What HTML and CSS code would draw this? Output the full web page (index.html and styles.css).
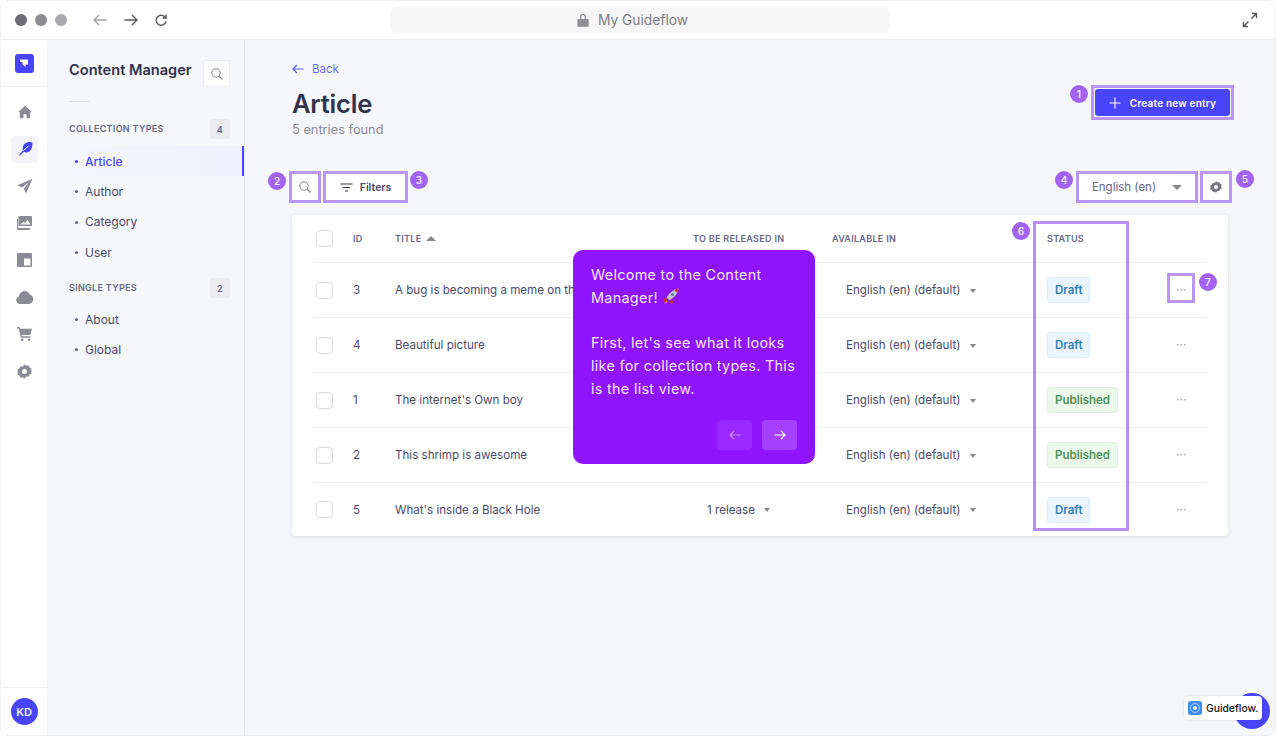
FILE: index.html
```html
<!DOCTYPE html>
<html lang="en">

<head>
    <meta charset="UTF-8">
    <meta name="viewport" content="width=device-width, initial-scale=1.0">
    <title>My Guideflow</title>
    <link rel="stylesheet" href="styles.css">
</head>

<body>
    <div class="window">
        <header class="topbar">
            <div class="dots">
                <span class="dot dot-1"></span>
                <span class="dot dot-2"></span>
                <span class="dot dot-3"></span>
            </div>
            <div class="nav-icons">
                <svg class="nav-back" width="16" height="16" viewBox="0 0 16 16"><path d="M14.5 8H2M7 3 2 8l5 5" /></svg>
                <svg class="nav-fwd" width="16" height="16" viewBox="0 0 16 16"><path d="M1.5 8H14M9 3l5 5-5 5" /></svg>
                <svg class="nav-fwd" width="14" height="14" viewBox="0 0 14 14"><path d="M11.6 5A5 5 0 1 0 12 8.5M12 1.5V5H8.5" /></svg>
            </div>
            <div class="address">
                <svg width="12" height="14" viewBox="0 0 12 14"><path fill="#8d8d92" d="M1.5 6h9A1.2 1.2 0 0 1 11.7 7.200v5.300A1.200 1.200 0 0 1 10.500 13.700h-9A1.200 1.200 0 0 1 .3 12.500V7.200A1.200 1.200 0 0 1 1.500 6zM3 6V3.800a3 3 0 0 1 6 0V6H7.700V3.800a1.700 1.700 0 0 0-3.400 0V6z" /></svg>
                <span>My Guideflow</span>
            </div>
            <svg class="expand" width="16" height="16" viewBox="0 0 16 16"><path d="M9.500 6.500 14.500 1.500M10 1.500h4.500V6M6.500 9.500l-5 5M1.500 10v4.500H6" /></svg>
        </header>

        <div class="app">
            <nav class="rail">
                <div class="rail-logo">
                    <span class="logo-box">
                        <svg width="10" height="10" viewBox="0 0 10 10"><path fill="#fff" d="M1 1.500h8v5H6.500V9L3.500 6.500V4H1z" /></svg>
                    </span>
                </div>
                <ul class="rail-icons">
                    <li><svg width="14" height="14" viewBox="0 0 16 16"><path d="M8 .8 .8 7.600 2 8.500V14a1.200 1.200 0 0 0 1.200 1.200h3.100v-4.700h3.400v4.700h3.100A1.200 1.200 0 0 0 14 14V8.500l1.200-.9z" /></svg></li>
                    <li class="rail-active">
                        <svg width="16" height="16" viewBox="0 0 16 16">
                            <path d="M15.500 1.500c-4-1.500-8.500.2-9.500 4-.4 1.500-.4 3-.1 4l-4 4.500.9.8 4.100-4c1.500.8 3.500.8 5 0 2.500-1.300 3.800-5.300 3.600-9.300z" />
                            <path class="vein" d="M6.500 9.500 11.500 5" />
                        </svg>
                    </li>
                    <li><svg width="16" height="16" viewBox="0 0 16 16"><path d="M15.500.8 .5 7.200l4.700 2.300L12 4 6.800 10.800l2.300 4.700z" /></svg></li>
                    <li>
                        <svg width="15" height="14" viewBox="0 0 15 14">
                            <path fill-rule="evenodd" d="M2.500 0H14a1 1 0 0 1 1 1v8a1 1 0 0 1-1 1H2.500a1 1 0 0 1-1-1V1a1 1 0 0 1 1-1zM3 8.500h10.500L10.500 4 8 7 6.500 5.800z" />
                            <path d="M0 3h1v8a1 1 0 0 0 1 1h11v1a1 1 0 0 1-1 1H1a1 1 0 0 1-1-1z" />
                        </svg>
                    </li>
                    <li><svg width="15" height="14" viewBox="0 0 15 14"><path fill-rule="evenodd" d="M1 0h13a1 1 0 0 1 1 1v12a1 1 0 0 1-1 1H1a1 1 0 0 1-1-1V1a1 1 0 0 1 1-1zM7 5.500v7h6.500v-7z" /></svg></li>
                    <li><svg width="17" height="13" viewBox="0 0 17 13"><path d="M4 13a4 4 0 0 1-1-7.800C3.400 2.300 5.800 0 8.700 0c2.400 0 4.500 1.500 5.300 3.700a4.800 4.800 0 0 1-1 9.300z" /></svg></li>
                    <li><svg width="15" height="14" viewBox="0 0 16 15"><path d="M0 0h2.800l.5 2H16l-1.800 6.500H5l.3 1.500h9v1.500H4L2 1.500H0zM5.500 12.200a1.400 1.400 0 1 1 0 2.800 1.400 1.400 0 0 1 0-2.800zm7.500 0a1.400 1.400 0 1 1 0 2.800 1.400 1.400 0 0 1 0-2.800z" /></svg></li>
                    <li><svg width="15" height="15" viewBox="0 0 16 16"><path fill-rule="evenodd" d="M8 .5 10 1.700l2.400-.1 1.100 2.100 2 1.300-.3 2.500.3 2.500-2 1.300-1.100 2.100-2.400-.1L8 15.500l-2-1.200-2.400.1-1.100-2.100-2-1.300.3-2.500-.3-2.500 2-1.300 1.100-2.100 2.400.1zM8 5.300a2.700 2.700 0 1 0 0 5.400 2.700 2.700 0 0 0 0-5.400z" /></svg></li>
                </ul>
                <div class="rail-user"><span class="avatar">KD</span></div>
            </nav>

            <aside class="subnav">
                <div class="subnav-head">
                    <h2>Content Manager</h2>
                    <span class="icon-btn">
                        <svg class="search-icon" width="12" height="12" viewBox="0 0 12 12"><circle cx="5" cy="5" r="4.200" /><path d="m8 8 3.500 3.500" /></svg>
                    </span>
                </div>
                <div class="subnav-rule"></div>
                <div class="section-head section-first"><span>COLLECTION TYPES</span><b>4</b></div>
                <ul class="links">
                    <li class="current">Article</li>
                    <li>Author</li>
                    <li>Category</li>
                    <li>User</li>
                </ul>
                <div class="section-head"><span>SINGLE TYPES</span><b>2</b></div>
                <ul class="links links-second">
                    <li>About</li>
                    <li>Global</li>
                </ul>
            </aside>

            <main class="content">
                <a class="back">
                    <svg width="12" height="10" viewBox="0 0 12 10"><path d="M11.500 5H1M5 1 1 5l4 4" /></svg>
                    Back
                </a>
                <div class="page-head">
                    <div>
                        <h1>Article</h1>
                        <p>5 entries found</p>
                    </div>
                    <button class="create">
                        <i class="marker m1">1</i>
                        <svg width="12" height="12" viewBox="0 0 12 12"><path d="M6 .5v11M.5 6h11" /></svg>
                        Create new entry
                    </button>
                </div>

                <div class="toolbar">
                    <div class="tools">
                        <span class="tool tool-search">
                            <i class="marker m2">2</i>
                            <svg class="search-icon" width="12" height="12" viewBox="0 0 12 12"><circle cx="5" cy="5" r="4.200" /><path d="m8 8 3.500 3.500" /></svg>
                        </span>
                        <span class="tool tool-filters">
                            <i class="marker m3">3</i>
                            <svg width="13" height="9" viewBox="0 0 13 9"><path d="M.5 1h12M3 4.500h7M5 8h3" /></svg>
                            Filters
                        </span>
                    </div>
                    <div class="tools">
                        <span class="tool tool-locale">
                            <i class="marker m4">4</i>
                            English (en)
                            <span class="caret caret-big"></span>
                        </span>
                        <span class="tool tool-gear">
                            <i class="marker m5">5</i>
                            <svg width="12" height="12" viewBox="0 0 16 16"><path fill="#777782" fill-rule="evenodd" d="M8 .5 10 1.700l2.400-.1 1.100 2.100 2 1.300-.3 2.500.3 2.500-2 1.300-1.100 2.100-2.400-.1L8 15.500l-2-1.200-2.400.1-1.100-2.100-2-1.300.3-2.500-.3-2.500 2-1.300 1.100-2.100 2.400.1zM8 5.300a2.700 2.700 0 1 0 0 5.400 2.700 2.700 0 0 0 0-5.400z" /></svg>
                        </span>
                    </div>
                </div>

                <section class="table-card">
                    <div class="row row-head">
                        <span class="check"></span>
                        <span>ID</span>
                        <span class="title-head">TITLE <i class="caret caret-up"></i></span>
                        <span>TO BE RELEASED IN</span>
                        <span>AVAILABLE IN</span>
                        <span>STATUS</span>
                        <span></span>
                    </div>
                    <div class="row">
                        <span class="check"></span>
                        <span>3</span>
                        <span>A bug is becoming a meme on th</span>
                        <span class="cell-in"></span>
                        <span class="cell-in">English (en) (default) <i class="caret"></i></span>
                        <span><em class="tag tag-draft">Draft</em></span>
                        <span class="more more-hl"><i class="marker m7">7</i>···</span>
                    </div>
                    <div class="row">
                        <span class="check"></span>
                        <span>4</span>
                        <span>Beautiful picture</span>
                        <span class="cell-in"></span>
                        <span class="cell-in">English (en) (default) <i class="caret"></i></span>
                        <span><em class="tag tag-draft">Draft</em></span>
                        <span class="more">···</span>
                    </div>
                    <div class="row">
                        <span class="check"></span>
                        <span>1</span>
                        <span>The internet's Own boy</span>
                        <span class="cell-in"></span>
                        <span class="cell-in">English (en) (default) <i class="caret"></i></span>
                        <span><em class="tag tag-pub">Published</em></span>
                        <span class="more">···</span>
                    </div>
                    <div class="row">
                        <span class="check"></span>
                        <span>2</span>
                        <span>This shrimp is awesome</span>
                        <span class="cell-in"></span>
                        <span class="cell-in">English (en) (default) <i class="caret"></i></span>
                        <span><em class="tag tag-pub">Published</em></span>
                        <span class="more">···</span>
                    </div>
                    <div class="row row-last">
                        <span class="check"></span>
                        <span>5</span>
                        <span>What's inside a Black Hole</span>
                        <span class="cell-in">1 release <i class="caret"></i></span>
                        <span class="cell-in">English (en) (default) <i class="caret"></i></span>
                        <span><em class="tag tag-draft">Draft</em></span>
                        <span class="more">···</span>
                    </div>

                    <div class="status-box"><i class="marker m6">6</i></div>

                    <div class="tour">
                        <p>Welcome to the Content Manager!
                            <svg class="rocket" width="18" height="19" viewBox="0 0 18 19">
                                <path fill="#c9302c" d="M4 10 1 12l1 3 3-1zM9 13l-2 3 3 1 2-3z" />
                                <path fill="#f59f2f" d="M4.500 13.500 2 17l3.500-2z" />
                                <path fill="#c4c4d0" d="M16.500 1.500C12 2 8 5 4.500 10.500l3 3C13 10 16 6 16.500 1.500z" />
                                <path fill="#c9302c" d="M16.500 1.500c-1.500.2-3 .7-4.300 1.500l2.800 2.800c.8-1.300 1.300-2.800 1.500-4.300z" />
                                <circle cx="10.500" cy="7.500" r="1.500" fill="#5a7fb5" />
                            </svg>
                        </p>
                        <p class="tour-gap">First, let's see what it looks like for collection types. This is the list view.</p>
                        <div class="tour-btns">
                            <span class="tour-btn tour-off"><svg width="12" height="10" viewBox="0 0 12 10"><path d="M11.500 5H1M5 1 1 5l4 4" /></svg></span>
                            <span class="tour-btn"><svg width="12" height="10" viewBox="0 0 12 10"><path d="M.5 5H11M7 1l4 4-4 4" /></svg></span>
                        </div>
                    </div>
                </section>
            </main>
        </div>

        <div class="help-bubble"></div>
        <div class="gf-badge">
            <span class="gf-logo">
                <svg width="14" height="14" viewBox="0 0 14 14"><circle cx="7" cy="7" r="4.500" fill="none" stroke="#a9cdf9" stroke-width="1" /><circle cx="7" cy="7" r="2" fill="#fff" /></svg>
            </span>
            Guideflow.
        </div>
    </div>
</body>

</html>
```

FILE: styles.css
```css
* {
    box-sizing: border-box;
}

html,
body {
    margin: 0;
    height: 100%;
    overflow: hidden;
    background: #fff;
}

body {
    font-family: Inter, "Liberation Sans", sans-serif;
    color: #32324d;
}

ul {
    list-style: none;
    margin: 0;
    padding: 0;
}

i,
em {
    font-style: normal;
}

svg {
    display: block;
    flex: none;
}

.window {
    position: relative;
    width: 1276px;
    height: 736px;
    border: 1px solid #eeeef0;
    border-radius: 8px;
    display: flex;
    flex-direction: column;
    overflow: hidden;
}

/* browser bar */
.topbar {
    height: 39px;
    flex: none;
    display: flex;
    align-items: center;
    background: #fff;
    border-bottom: 1px solid #ececef;
    padding-left: 14px;
}

.dots {
    display: flex;
    gap: 8px;
}

.dot {
    width: 12px;
    height: 12px;
    border-radius: 50%;
}

.dot-1 {
    background: #6c6c72;
}

.dot-2 {
    background: #8c8c91;
}

.dot-3 {
    background: #a9a9ad;
}

.nav-icons {
    display: flex;
    align-items: center;
    gap: 15px;
    margin-left: 25px;
    width: 298px;
}

.nav-icons path,
.expand path {
    fill: none;
    stroke-width: 1.4;
}

.nav-back path {
    stroke: #a2a2a8;
}

.nav-fwd path {
    stroke: #55555c;
}

.expand {
    margin-left: 353px;
}

.expand path {
    stroke: #55555c;
}

.address {
    width: 499px;
    height: 26px;
    background: #f6f6f7;
    border-radius: 6px;
    display: flex;
    align-items: center;
    justify-content: center;
    gap: 9px;
    padding-right: 14px;
    font-size: 13.800px;
    color: #7d7d84;
}

.app {
    flex: 1;
    display: flex;
    min-height: 0;
}

/* icon rail */
.rail {
    width: 47px;
    flex: none;
    background: #fff;
    border-right: 1px solid #f0f0f3;
    display: flex;
    flex-direction: column;
}

.rail-logo {
    height: 47px;
    border-bottom: 1px solid #f0f0f3;
    display: flex;
    align-items: center;
    justify-content: center;
    flex: none;
}

.logo-box {
    width: 19px;
    height: 19px;
    border-radius: 3px;
    background: #4945ff;
    display: flex;
    align-items: center;
    justify-content: center;
}

.rail-icons {
    flex: 1;
    padding-top: 11.500px;
}

.rail-icons li {
    height: 27px;
    width: 27px;
    margin: 0 0 10px 10px;
    border-radius: 4px;
    display: flex;
    align-items: center;
    justify-content: center;
}

.rail-icons path {
    fill: #8b8b96;
}

.rail-active {
    background: #f4f4f8;
}

.rail-icons .rail-active path {
    fill: #4945ff;
}

.rail-icons .rail-active .vein {
    fill: none;
    stroke: #f4f4f8;
    stroke-width: 1;
}

.rail-user {
    height: 48px;
    border-top: 1px solid #f0f0f3;
    display: flex;
    align-items: center;
    justify-content: center;
    flex: none;
}

.avatar {
    width: 27px;
    height: 27px;
    border-radius: 50%;
    background: #4945ff;
    color: #eeeeff;
    font-size: 11px;
    font-weight: 600;
    display: flex;
    align-items: center;
    justify-content: center;
}

/* content manager nav */
.subnav {
    width: 197px;
    flex: none;
    background: #f6f7fa;
    border-right: 1px solid #e8e8ee;
}

.subnav-head {
    display: flex;
    align-items: center;
    justify-content: space-between;
    padding: 20px 14px 0 21px;
}

.subnav-head h2 {
    margin: 0 0 8px;
    font-size: 14.600px;
    font-weight: 600;
    color: #32324d;
}

.icon-btn {
    width: 27px;
    height: 27px;
    background: #fff;
    border: 1px solid #ebebf0;
    border-radius: 3px;
    display: flex;
    align-items: center;
    justify-content: center;
}

.search-icon circle,
.search-icon path {
    fill: none;
    stroke: #85858f;
    stroke-width: 1.1;
}

.subnav-rule {
    width: 20px;
    height: 1px;
    background: #dcdce4;
    margin: 14px 0 0 21px;
}

.section-head {
    display: flex;
    align-items: center;
    justify-content: space-between;
    height: 20px;
    padding: 0 14px 0 21px;
    margin-top: 11px;
    font-size: 9px;
    font-weight: 600;
    letter-spacing: .3px;
    color: #666687;
}

.section-first {
    margin-top: 17px;
}

.section-head span {
    position: relative;
    top: -1px;
}

.section-head b {
    width: 20px;
    height: 20px;
    background: #eaeaef;
    border-radius: 3px;
    display: flex;
    align-items: center;
    justify-content: center;
    font-size: 9px;
    font-weight: 600;
}

.links {
    margin-top: 7px;
}

.links-second {
    margin-top: 6px;
}

.links li {
    height: 30.300px;
    display: flex;
    align-items: center;
    padding-left: 37px;
    position: relative;
    font-size: 12px;
    color: #4a4a6a;
}

.links li::before {
    content: "";
    position: absolute;
    left: 27px;
    top: 14px;
    width: 3px;
    height: 3px;
    border-radius: 50%;
    background: #666687;
}

.links .current {
    color: #4945ff;
    font-weight: 500;
    background: linear-gradient(90deg, #f6f7fa, #f0f0ff);
    border-right: 2px solid #4945ff;
}

.links .current::before {
    background: #4945ff;
}

/* main area */
.content {
    flex: 1;
    min-width: 0;
    background: #f6f7fa;
    padding: 22px 43px 0 47px;
}

.back {
    display: flex;
    align-items: center;
    gap: 8px;
    font-size: 11.500px;
    line-height: 14px;
    color: #6f6bff;
}

.back path {
    fill: none;
    stroke: #5a56ff;
    stroke-width: 1.2;
}

.page-head {
    display: flex;
    justify-content: space-between;
    align-items: flex-start;
    margin-top: 5px;
}

.page-head h1 {
    margin: 5px 0 0;
    font-size: 25.500px;
    line-height: 36px;
    font-weight: 600;
    color: #32324d;
    letter-spacing: -.2px;
}

.page-head p {
    margin: 0;
    font-size: 12.800px;
    line-height: 16px;
    color: #8a8a9a;
}

.marker {
    position: absolute;
    width: 18px;
    height: 18px;
    border-radius: 50%;
    background: #a263f2;
    color: #f1e6ff;
    font-size: 10px;
    font-weight: 600;
    line-height: 18px;
    text-align: center;
}

.create {
    position: relative;
    margin: 8px 2px 0 0;
    width: 135px;
    height: 27px;
    background: #4945ff;
    border: 0;
    border-radius: 3px;
    color: #fff;
    font-family: inherit;
    font-size: 10px;
    font-weight: 600;
    letter-spacing: .2px;
    display: flex;
    align-items: center;
    justify-content: center;
    gap: 9px;
}

.create::after {
    content: "";
    position: absolute;
    inset: -4px;
    border: 3px solid #bb95f3;
}

.create path {
    fill: none;
    stroke: #fff;
    stroke-width: 1.1;
}

.m1 {
    left: -25px;
    top: -4px;
}

.toolbar {
    display: flex;
    justify-content: space-between;
    margin-top: 36px;
}

.tools {
    display: flex;
    gap: 8px;
}

.tool {
    position: relative;
    height: 26px;
    display: flex;
    align-items: center;
    justify-content: center;
    background: #fff;
    outline: 3px solid #bb95f3;
}

.tool-search {
    width: 26px;
}

.tool-filters {
    width: 79px;
    gap: 7px;
    font-size: 10.500px;
    font-weight: 600;
    color: #4a4a6a;
}

.tool-filters path {
    fill: none;
    stroke: #32324d;
    stroke-width: 1.200;
}

.tool-locale {
    width: 116px;
    gap: 16px;
    font-size: 11.500px;
    color: #666687;
}

.tool-gear {
    width: 26px;
    margin-right: 3px;
}

.m2 {
    left: -24px;
    top: -2px;
}

.m3 {
    left: 84px;
    top: -3px;
}

.m4 {
    left: -24px;
    top: -3px;
}

.m5 {
    right: -25px;
    top: -4px;
}

.caret {
    display: inline-block;
    width: 0;
    height: 0;
    border-left: 3.500px solid transparent;
    border-right: 3.500px solid transparent;
    border-top: 4px solid #85858f;
    vertical-align: middle;
    margin-left: 6px;
}

.caret-big {
    border-left-width: 5px;
    border-right-width: 5px;
    border-top-width: 5px;
    margin-left: 0;
}

.caret-up {
    border-top: 0;
    border-bottom: 5px solid #85858f;
    border-left-width: 5px;
    border-right-width: 5px;
    margin-left: 5px;
}

/* table */
.table-card {
    position: relative;
    margin-top: 15px;
    width: 936px;
    height: 321px;
    background: #fff;
    border-radius: 3px;
    box-shadow: 0 1px 4px rgba(33, 33, 52, .12);
    padding: 0 21px;
}

.row {
    display: grid;
    grid-template-columns: 40px 42px 298px 139px 215px 129px 32px;
    align-items: center;
    height: 55px;
    border-bottom: 1px solid #f0f0f4;
    font-size: 11.600px;
    color: #4a4a6a;
    white-space: nowrap;
}

.row-head {
    height: 48px;
    font-size: 9px;
    font-weight: 600;
    letter-spacing: .3px;
    color: #666687;
}

.row-last {
    height: 53px;
    border-bottom: 0;
}

.check {
    width: 17px;
    height: 17px;
    margin-left: 3px;
    background: #fff;
    border: 1px solid #dcdce4;
    border-radius: 4px;
}

.title-head {
    display: flex;
    align-items: center;
}

.cell-in {
    padding-left: 14px;
}

.tag {
    display: inline-block;
    height: 26px;
    line-height: 24px;
    padding: 0 7px;
    font-size: 11.500px;
    font-weight: 600;
    border-radius: 3px;
    border: 1px solid;
}

.tag-draft {
    background: #eaf5ff;
    border-color: #d9edfd;
    color: #2f81bd;
}

.tag-pub {
    background: #eaf9e9;
    border-color: #ddf3da;
    color: #4c9160;
}

.more {
    position: relative;
    color: #9a9aa8;
    font-size: 12px;
    letter-spacing: 0;
    line-height: 14px;
}

.more-hl::after {
    content: "";
    position: absolute;
    left: -9px;
    top: -10px;
    width: 22px;
    height: 24px;
    border: 3px solid #bb95f3;
}

.m7 {
    left: 23px;
    top: -10px;
}

.status-box {
    position: absolute;
    left: 741px;
    top: 6px;
    width: 96px;
    height: 310px;
    border: 3px solid #b88ef2;
}

.m6 {
    left: -24px;
    top: -2px;
}

/* tour popup */
.tour {
    position: absolute;
    left: 281px;
    top: 35px;
    width: 242px;
    height: 214px;
    background: #8f14ff;
    border-radius: 10px;
    padding: 13px 10px 13px 18px;
    color: #f3e6ff;
    font-size: 14.400px;
    line-height: 23px;
    letter-spacing: .3px;
}

.tour p {
    margin: 0;
}

.rocket {
    display: inline-block;
    vertical-align: -3px;
}

.tour .tour-gap {
    margin-top: 22px;
    width: 210px;
}

.tour-btns {
    display: flex;
    justify-content: flex-end;
    gap: 10px;
    margin: 20px 8px 0 0;
}

.tour-btn {
    width: 35px;
    height: 30px;
    border-radius: 4px;
    background: #a540ff;
    display: flex;
    align-items: center;
    justify-content: center;
}

.tour-btn path {
    fill: none;
    stroke: #fff;
    stroke-width: 1.200;
}

.tour-off {
    background: #9a28ff;
}

.tour-off path {
    stroke: #c88bff;
}

/* guideflow corner */
.help-bubble {
    position: absolute;
    left: 1233px;
    top: 692px;
    width: 36px;
    height: 36px;
    border-radius: 50%;
    background: #4945ff;
}

.gf-badge {
    position: absolute;
    left: 1183px;
    top: 695px;
    width: 78px;
    height: 24px;
    background: #fff;
    border-radius: 4px;
    box-shadow: 0 0 3px rgba(33, 33, 52, .15);
    display: flex;
    align-items: center;
    gap: 4px;
    padding-left: 4px;
    font-size: 10.300px;
    font-weight: 500;
    color: #111;
}

.gf-logo {
    width: 14px;
    height: 14px;
    border-radius: 3px;
    background: #3f8cf0;
}
```
